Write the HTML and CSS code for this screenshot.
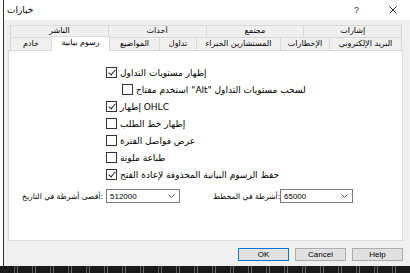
FILE: index.html
```html
<!doctype html>
<html>

<head>
  <meta charset='utf-8'>
  <title>خيارات</title>
  <link rel="stylesheet" href="styles.css">
</head>

<body>
  <div class='screen'>
    <div class='dialog'>
      <div class='titlebar'>
        <span class='title'>خيارات</span>
        <span class='tb-help'>?</span>
        <span class='tb-close'>
          <svg width='8' height='8' viewBox='0 0 8 8'><path d='M0.5 0.5L7.5 7.5M7.5 0.5L0.5 7.5' stroke='#222' stroke-width='1' fill='none'/></svg>
        </span>
      </div>
      <div class='body'>
        <div class='tabs'>
          <div class='tabrow toprow'>
            <div class='tab'>الناشر</div>
            <div class='tab'>أحداث</div>
            <div class='tab'>مجتمع</div>
            <div class='tab'>إشارات</div>
          </div>
          <div class='tabrow lowrow'>
            <div class='tab t-server'>خادم</div>
            <div class='tab t-charts active'>رسوم بيانية</div>
            <div class='tab t-objects'>المواضيع</div>
            <div class='tab t-trade'>تداول</div>
            <div class='tab t-experts'>المستشارين الخبراء</div>
            <div class='tab t-notify'>الإخطارات</div>
            <div class='tab t-email'>البريد الإلكتروني</div>
          </div>
        </div>
        <div class='panel'>
          <div class='checks'>
            <div class='check on'><span class='box'></span><span class='txt'>إظهار مستويات التداول</span></div>
            <div class='check sub'><span class='box'></span><span class='txt'>استخدم مفتاح "Alt" لسحب مستويات التداول</span></div>
            <div class='check on'><span class='box'></span><span class='txt'>إظهار OHLC</span></div>
            <div class='check'><span class='box'></span><span class='txt'>إظهار خط الطلب</span></div>
            <div class='check'><span class='box'></span><span class='txt'>عرض فواصل الفترة</span></div>
            <div class='check'><span class='box'></span><span class='txt'>طباعة ملونة</span></div>
            <div class='check on'><span class='box'></span><span class='txt'>حفظ الرسوم البيانية المحذوفة لإعادة الفتح</span></div>
          </div>
          <div class='combos'>
            <div class='field f-history'>
              <span class='lbl'>أقصى أشرطة في التاريخ:</span>
              <div class='combo'><span>512000</span><svg width='7' height='4' viewBox='0 0 7 4'><path d='M0.5 0.5L3.5 3.5L6.5 0.5' stroke='#555' fill='none'/></svg></div>
            </div>
            <div class='field f-chart'>
              <span class='lbl'>أشرطة في المخطط:</span>
              <div class='combo'><span>65000</span><svg width='7' height='4' viewBox='0 0 7 4'><path d='M0.5 0.5L3.5 3.5L6.5 0.5' stroke='#555' fill='none'/></svg></div>
            </div>
          </div>
        </div>
        <div class='buttons'>
          <div class='btn default'>OK</div>
          <div class='btn'>Cancel</div>
          <div class='btn'>Help</div>
        </div>
      </div>
    </div>
    <div class='taskstrip'></div>
  </div>
</body>

</html>
```

FILE: styles.css
```css
* {
  margin: 0;
  padding: 0;
  box-sizing: border-box;
}
body {
  width: 410px;
  height: 273px;
  overflow: hidden;
  background: #fff;
  font-family: "Liberation Sans", "DejaVu Sans", sans-serif;
  font-size: 8px;
  color: #000;
}
.screen {
  display: flex;
  flex-direction: column;
  height: 273px;
}
.dialog {
  flex: 1;
  margin-left: 3px;
  border-left: 1px solid #2d2d2d;
  background: #f0f0f0;
  display: flex;
  flex-direction: column;
}
.titlebar {
  height: 20px;
  background: #fff;
  display: flex;
  align-items: center;
  padding-left: 3px;
}
.title {
  font-family: "DejaVu Sans", sans-serif;
  font-size: 9px;
}
.tb-help {
  margin-left: auto;
  font-size: 9px;
  color: #333;
}
.tb-close {
  display: flex;
  margin: 0 13px 0 30px;
}
.body {
  flex: 1;
  padding: 5px 7px 0 4px;
  display: flex;
  flex-direction: column;
}
.tabs {
  margin: 0 1px 0 2px;
}
.tabrow {
  display: flex;
}
.tab {
  border: 1px solid #d9d9d9;
  margin-left: -1px;
  background: #f0f0f0;
  text-align: center;
  white-space: nowrap;
  overflow: hidden;
  font-family: "DejaVu Sans", sans-serif;
  font-size: 8px;
}
.tab:first-child {
  margin-left: 0;
}
.toprow .tab {
  flex: 1;
  height: 11px;
  line-height: 9px;
  border-bottom: none;
}
.lowrow {
  align-items: flex-end;
}
.lowrow .tab {
  height: 13px;
  line-height: 11px;
  border-bottom: none;
}
.lowrow .tab.active {
  height: 15px;
  margin-bottom: -1px;
  background: #fff;
  position: relative;
  line-height: 12px;
}
.t-server { width: 42px; }
.t-charts { width: 59px; }
.t-objects { width: 51px; }
.t-trade { width: 38px; }
.t-experts { width: 85px; }
.t-notify { width: 50px; }
.t-email { width: 73px; }
.panel {
  height: 191px;
  background: #fff;
  border: 1px solid #d9d9d9;
}
.checks {
  padding: 13px 0 0 97px;
}
.check {
  display: flex;
  align-items: center;
  height: 17px;
}
.check.sub {
  padding-left: 16px;
}
.box {
  width: 11px;
  height: 11px;
  border: 1px solid #333;
  background: #fff;
  flex: none;
  position: relative;
}
.check.on .box::after {
  content: '';
  position: absolute;
  left: 3px;
  top: 0px;
  width: 3px;
  height: 6px;
  border: solid #222;
  border-width: 0 1px 1px 0;
  transform: rotate(40deg);
}
.txt {
  margin-left: 3px;
  font-family: "DejaVu Sans", sans-serif;
  font-size: 9px;
  white-space: nowrap;
}
.combos {
  display: flex;
  margin-top: 6px;
  padding-left: 8px;
}
.field {
  display: flex;
  align-items: center;
}
.f-chart {
  margin-left: 33px;
}
.lbl {
  font-family: "DejaVu Sans", sans-serif;
  font-size: 7.6px;
  white-space: nowrap;
  text-align: right;
  margin-right: 3px;
}
.f-history .lbl { width: 86px; }
.f-chart .lbl { width: 64px; }
.combo {
  height: 14px;
  border: 1px solid #7a7a7a;
  background: #fff;
  display: flex;
  align-items: center;
  justify-content: space-between;
  padding: 0 4px 0 3px;
}
.f-history .combo { width: 74px; }
.f-chart .combo { width: 73px; }
.buttons {
  display: flex;
  justify-content: flex-end;
  gap: 6px;
  margin-top: 7px;
}
.btn {
  width: 51px;
  height: 13px;
  border: 1px solid #adadad;
  background: #e1e1e1;
  text-align: center;
  line-height: 11px;
}
.btn.default {
  border-color: #0078d7;
}
.taskstrip {
  height: 7px;
  background: #1a1a1a repeating-linear-gradient(90deg, #1a1a1a 0 14px, #5a5a5a 14px 15px, #1a1a1a 15px 17px, #6a6a6a 17px 18px);
}
```
